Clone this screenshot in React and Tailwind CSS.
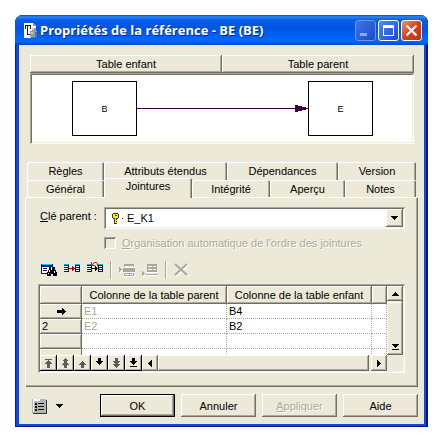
import React from "react";

const raised =
  "bg-[#ece9d8] shadow-[inset_-1px_-1px_#716f64,inset_1px_1px_#fff,inset_-2px_-2px_#aca899]";
const sunken =
  "shadow-[inset_1px_1px_#aca899,inset_-1px_-1px_#fff,inset_2px_2px_#716f64,inset_-2px_-2px_#f1efe2]";
const disabledText = "text-[#aca899] [text-shadow:1px_1px_#fff]";

const AppIcon = () => (
  <svg width="16" height="17" viewBox="0 0 16 17" shapeRendering="crispEdges">
    <path d="M1 1h9l3 3v12H1z" fill="#fff" />
    <path d="M2 3h6v1H2z" fill="#111a4a" />
    <path d="M2 4h1v3H2zM4 4h1v8H4zM7 4h1v3H7zM4 12h4v1H4z" fill="#111a4a" />
    <path d="M10 1l3 3h-3z" fill="#8aa" />
    <path d="M9 6h4v3H9zM7 9h7v6H7z" fill="#9a9a9a" />
    <path d="M9 6h2v2H9zM8 10h2v2H8z" fill="#d0d0d0" />
    <path d="M12 10h2v5h-2zM8 15h5v1H8z" fill="#6d6d6d" />
  </svg>
);

const KeyIcon = () => (
  <svg width="8" height="11" viewBox="0 0 8 11" shapeRendering="crispEdges">
    <path d="M1 0h5v1h1v4H6v1H5v5H2V6H1V5H0V1h1z" fill="#333" />
    <path d="M1 1h5v4H1zM3 5h1v5H3z" fill="#ffee00" />
    <path d="M3 2h2v1H3z" fill="#333" />
    <path d="M4 7h1v1H4zM4 9h1v1H4z" fill="#ffee00" />
  </svg>
);

const FindIcon = () => (
  <svg width="16" height="16" viewBox="0 0 16 16" shapeRendering="crispEdges">
    <path d="M0 2h12v10H0z" fill="#10106b" />
    <path d="M1 2h10v1H1z" fill="#00d8e8" />
    <path d="M1 5h10v6H1z" fill="#fff" />
    <path d="M2 6h4v1H2zM2 8h4v1H2z" fill="#10106b" />
    <path d="M8 5h2v3h2V5h2v3h1v2h1v4h-4v-3h-2v3H6v-4h1V8h1z" fill="#000" />
    <path d="M8 8h1v2H8zM13 9h1v2h-1zM7 11h1v1H7z" fill="#fff" />
  </svg>
);

const MiniTables = () => (
  <>
    <path d="M0 3h5v7H0zM11 3h5v7h-5z" fill="#10106b" />
    <path d="M0 2h5v1H0zM11 2h5v1h-5z" fill="#00b8e0" />
    <path d="M0 4h4v1H0zM0 6h4v1H0zM0 8h4v1H0zM12 4h3v1h-3zM12 6h3v1h-3zM12 8h3v1h-3z" fill="#fff" />
  </>
);

const JoinIcon = () => (
  <svg width="16" height="16" viewBox="0 0 16 16" shapeRendering="crispEdges">
    <MiniTables />
    <path d="M5 6h6v1H5zM8 4h1v5H8zM9 5h1v3H9z" fill="#c00000" />
  </svg>
);

const UnjoinIcon = () => (
  <svg width="16" height="16" viewBox="0 0 16 16" shapeRendering="crispEdges">
    <MiniTables />
    <path d="M5 6h6v1H5zM8 4h1v5H8zM9 5h1v3H9z" fill="#000" />
    <path d="M4 0h1v4H4zM5 3h3v1H5zM5 2h1v1H5zM6 1h1v1H6zM7 0h3v1H7zM10 1h1v3h-1z" fill="#c02020" />
  </svg>
);

const InsertRowIcon = () => (
  <svg width="16" height="16" viewBox="0 0 16 16" shapeRendering="crispEdges">
    <path d="M1 6h1v5H1zM2 7h1v3H2zM3 8h1v1H3zM5 5h11v1H5zM5 10h11v1H5zM5 14h11v1H5z" fill="#fff" />
    <path d="M0 5h1v5H0zM1 6h1v3H1zM2 7h1v1H2zM5 2h10v3H5zM4 6h12v4H4zM5 11h10v3H5z" fill="#aca899" />
    <path d="M6 4h4v1H6zM11 4h3v1h-3zM6 12h4v1H6zM11 12h3v1h-3z" fill="#fff" />
  </svg>
);

const AddRowIcon = () => (
  <svg width="16" height="16" viewBox="0 0 16 16" shapeRendering="crispEdges">
    <path d="M1 10h1v5H1zM2 11h1v3H2zM5 10h11v1H5zM5 13h11v1H5z" fill="#fff" />
    <path d="M0 9h1v5H0zM1 10h1v3H1zM2 11h1v1H2zM5 2h10v8H5zM4 12h12v1H4z" fill="#aca899" />
    <path d="M6 4h4v1H6zM11 4h3v1h-3zM6 7h4v1H6zM11 7h3v1h-3z" fill="#fff" />
  </svg>
);

const DeleteIcon = () => (
  <svg width="15" height="16" viewBox="0 0 15 16" fill="none" strokeWidth="2">
    <path d="M2 3l12 11M14 3L2 14" stroke="#fff" />
    <path d="M1 2l12 11M13 2L1 13" stroke="#aca899" />
  </svg>
);

const MenuIcon = () => (
  <svg width="16" height="16" viewBox="0 0 16 16" shapeRendering="crispEdges">
    <path d="M1 2h14v14H1z" fill="#333" />
    <path d="M0 1h14v14H0z" fill="#b4b4b4" />
    <path d="M1 1h7v2H1zM1 3h1v11H1z" fill="#fff" />
    <path d="M3 5h2v2H3zM3 8h2v2H3zM3 11h2v2H3zM6 5h6v1H6zM6 8h6v1H6zM6 11h6v1H6z" fill="#111" />
  </svg>
);

const DownTriangle = () => (
  <svg width="7" height="4" viewBox="0 0 7 4" shapeRendering="crispEdges">
    <path d="M0 0h7v1H0zM1 1h5v1H1zM2 2h3v1H2zM3 3h1v1H3z" />
  </svg>
);

// first, page up, up, down, page down, last
const navButtons = [
  { label: "Premier", color: "#5c5c5c", d: "M1 1h7v1H1zM4 2h1v1H4zM3 3h3v1H3zM2 4h5v1H2zM1 5h7v1H1zM3 6h3v4H3z" },
  { label: "Page précédente", color: "#5c5c5c", d: "M4 0h1v1H4zM3 1h3v1H3zM2 2h5v1H2zM3 3h3v1H3zM3 4h3v1H3zM2 5h5v1H2zM1 6h7v1H1zM3 7h3v3H3z" },
  { label: "Précédent", color: "#5c5c5c", d: "M4 3h1v1H4zM3 4h3v1H3zM2 5h5v1H2zM1 6h7v1H1zM3 7h3v3H3z" },
  { label: "Suivant", color: "#000", d: "M3 0h3v3H3zM1 3h7v1H1zM2 4h5v1H2zM3 5h3v1H3zM4 6h1v1H4z" },
  { label: "Page suivante", color: "#5c5c5c", d: "M3 0h3v3H3zM1 3h7v1H1zM2 4h5v1H2zM3 5h3v1H3zM1 6h7v1H1zM2 7h5v1H2zM3 8h3v1H3zM4 9h1v1H4z" },
  { label: "Dernier", color: "#000", d: "M3 0h3v3H3zM1 3h7v1H1zM2 4h5v1H2zM3 5h3v1H3zM4 6h1v1H4zM1 8h7v1H1z" },
];

const rows = [
  { num: "", current: true, parent: "E1", child: "B4" },
  { num: "2", parent: "E2", child: "B2" },
  { num: "", parent: "", child: "" },
];

const Tab = ({ children, selected }) => (
  <button
    role="tab"
    aria-selected={!!selected}
    className={
      selected
        ? "relative z-10 -mt-0.5 -mb-px rounded-t-xs bg-[#ece9d8] pb-1 shadow-[inset_1px_1px_#fff,inset_-1px_0_#716f64,inset_-2px_0_#aca899]"
        : "rounded-t-xs shadow-[inset_1px_1px_#fff,inset_-1px_0_#716f64,inset_-2px_0_#aca899]"
    }
  >
    {children}
  </button>
);

const TitleButton = ({ label, className, children }) => (
  <button
    aria-label={label}
    className={`flex h-[21px] w-[21px] items-center justify-center rounded-[3px] border ${className}`}
  >
    {children}
  </button>
);

const headCell =
  "h-[18px] border-r border-b border-[#716f64] bg-[#ece9d8] p-0 text-center font-normal shadow-[inset_1px_1px_#fff,inset_-1px_-1px_#aca899]";
const bodyCell =
  "border-r border-b border-dotted border-[#aca899] p-0 pl-0.5 text-left";

const App = () => {
  return (
    <div className="bg-white pt-[15px] pr-3 pb-2 pl-[15px] font-['Liberation_Sans',Arial,sans-serif] text-[11px] leading-[14px] text-black">
      <div className="overflow-hidden rounded-t-lg bg-[#0a48e0] shadow-[inset_1px_0_#0019cf,inset_-2px_-1px_#00138c]">
        <header className="flex h-[30px] items-center gap-px bg-[linear-gradient(#0a45b8_0%,#2b86f8_6%,#0a5ee8_16%,#0054e3_45%,#0064fc_75%,#0066ff_88%,#0048c8_100%)] pr-1.5 pl-2">
          <AppIcon />
          <h1 className="flex-1 text-[13px] font-bold whitespace-nowrap text-white [font-family:'Open_Sans',sans-serif] [text-shadow:1px_1px_#0a2a80]">
            Propriétés de la référence - BE (BE)
          </h1>
          <div className="flex gap-0.5">
            <TitleButton
              label="Réduire"
              className="border-[#6a94e8] bg-[linear-gradient(135deg,#3f74e4,#1c4cc8)]"
            >
              <span className="mt-2 mr-1 h-[3px] w-[7px] bg-[#8cabee]" />
            </TitleButton>
            <TitleButton
              label="Agrandir"
              className="border-white bg-[linear-gradient(135deg,#4f8cf6,#1648d8)]"
            >
              <span className="h-[11px] w-[11px] border border-t-[3px] border-white" />
            </TitleButton>
            <TitleButton
              label="Fermer"
              className="border-white bg-[linear-gradient(135deg,#f09070,#d8401c_50%,#c03010)]"
            >
              <svg width="13" height="13" viewBox="0 0 13 13">
                <path d="M1.5 1.5l10 10M11.5 1.5l-10 10" stroke="#fff" strokeWidth="2.2" />
              </svg>
            </TitleButton>
          </div>
        </header>

        <main className="mx-1 mb-[3px] bg-[#ece9d8] px-1.5 pt-2.5 pb-[7px]">
          <section className="mr-1 ml-[5px]">
            <div className="grid h-[18px] grid-cols-2 text-center">
              <div className={`pt-0.5 ${raised}`}>Table enfant</div>
              <div className={`pt-0.5 ${raised}`}>Table parent</div>
            </div>
            <div className={`flex h-[71px] items-center bg-white pr-[41px] pl-[42px] ${sunken}`}>
              <div className="flex h-[55px] w-[65px] items-center justify-center border border-black text-[9px]">
                B
              </div>
              <div className="h-px flex-1 bg-[#400040]" />
              <svg width="13" height="7" viewBox="0 0 13 7" shapeRendering="crispEdges">
                <path d="M0 0h3v1h4v1h4v1h2v1h-2v1H7v1H3v1H0z" fill="#400040" />
              </svg>
              <div className="flex h-[55px] w-[65px] items-center justify-center border border-black text-[9px]">
                E
              </div>
            </div>
          </section>

          <div role="tablist" className="mx-0.5 mt-[18px]">
            <div className="grid h-[18px] grid-cols-[77fr_123fr_111fr_78fr]">
              <Tab>Règles</Tab>
              <Tab>Attributs étendus</Tab>
              <Tab>Dépendances</Tab>
              <Tab>Version</Tab>
            </div>
            <div className="grid h-[17px] grid-cols-[77fr_88fr_78fr_75fr_71fr]">
              <Tab>Général</Tab>
              <Tab selected>Jointures</Tab>
              <Tab>Intégrité</Tab>
              <Tab>Aperçu</Tab>
              <Tab>Notes</Tab>
            </div>
          </div>

          <section
            role="tabpanel"
            className="px-[13px] pt-2.5 pb-3.5 shadow-[inset_1px_1px_#fff,inset_-1px_-1px_#716f64,inset_-2px_-2px_#aca899]"
          >
            <div className="flex items-center">
              <label htmlFor="parent-key" className="w-[66px] pb-1 pl-0.5">
                <u>C</u>lé parent :
              </label>
              <div className={`relative h-[22px] flex-1 bg-white p-0.5 ${sunken}`}>
                <select
                  id="parent-key"
                  className="h-full w-full appearance-none pl-[21px] text-[11px] outline-none"
                >
                  <option>E_K1</option>
                </select>
                <span className="pointer-events-none absolute top-[6px] left-2 flex items-center gap-0.5">
                  <KeyIcon />
                  <span className="h-px w-px bg-black" />
                </span>
                <span
                  className={`pointer-events-none absolute top-0.5 right-0.5 bottom-0.5 flex w-[17px] items-center justify-center ${raised}`}
                >
                  <DownTriangle />
                </span>
              </div>
            </div>

            <div className="mt-[7px] ml-[66px] flex items-center gap-1.5">
              <input
                id="auto-order"
                type="checkbox"
                disabled
                className={`h-3 w-3 appearance-none bg-[#ece9d8] ${sunken}`}
              />
              <label htmlFor="auto-order" className={disabledText}>
                <u>O</u>rganisation automatique de l'ordre des jointures
              </label>
            </div>

            <div className="mt-[11px] flex h-[18px] items-center gap-[7px] pl-[3px]">
              <button aria-label="Rechercher"><FindIcon /></button>
              <button aria-label="Joindre"><JoinIcon /></button>
              <button aria-label="Supprimer les jointures"><UnjoinIcon /></button>
              <span className="h-full w-0.5 border-r border-l border-r-white border-l-[#aca899]" />
              <button aria-label="Insérer une ligne" disabled><InsertRowIcon /></button>
              <button aria-label="Ajouter une ligne" disabled><AddRowIcon /></button>
              <span className="h-full w-0.5 border-r border-l border-r-white border-l-[#aca899]" />
              <button aria-label="Supprimer" disabled><DeleteIcon /></button>
            </div>

            <div className={`mt-[5px] bg-[#ece9d8] p-0.5 ${sunken}`}>
              <div className="flex h-[69px]">
                <div className="min-w-0 flex-1 overflow-hidden bg-white">
                  <table className="w-full table-fixed border-separate border-spacing-0">
                    <colgroup>
                      <col className="w-[42px]" />
                      <col className="w-[145px]" />
                      <col className="w-[145px]" />
                      <col />
                    </colgroup>
                    <thead>
                      <tr>
                        <th className={headCell} />
                        <th className={headCell}>Colonne de la table parent</th>
                        <th className={headCell}>Colonne de la table enfant</th>
                        <th className={headCell} />
                      </tr>
                    </thead>
                    <tbody>
                      {rows.map((row, i) => (
                        <tr key={i} className="h-[15px]">
                          <th className="border-r border-b border-[#716f64] bg-[#ece9d8] p-0 pl-0.5 text-left font-normal shadow-[inset_1px_1px_#fff,inset_-1px_-1px_#aca899]">
                            {row.current ? (
                              <svg className="mx-auto" width="9" height="7" viewBox="0 0 9 7" shapeRendering="crispEdges">
                                <path d="M0 2h5V0h1v1h1v1h1v1h1v1H8v1H7v1H6v1H5V5H0z" />
                              </svg>
                            ) : (
                              row.num
                            )}
                          </th>
                          <td className={`${bodyCell} text-[#aca899]`}>{row.parent}</td>
                          <td className={bodyCell}>{row.child}</td>
                          <td className={bodyCell} />
                        </tr>
                      ))}
                      <tr className="h-[15px]">
                        <th className="border-r border-[#716f64] bg-[#ece9d8] shadow-[inset_1px_1px_#fff]" />
                        <td className={bodyCell} />
                        <td className={bodyCell} />
                        <td className={bodyCell} />
                      </tr>
                    </tbody>
                  </table>
                </div>
                <div className={`flex w-4 flex-col ${raised}`}>
                  <button
                    aria-label="Défiler vers le haut"
                    className={`flex h-[15px] items-center justify-center ${raised}`}
                  >
                    <svg width="7" height="4" viewBox="0 0 7 4" shapeRendering="crispEdges">
                      <path d="M3 0h1v1H3zM2 1h3v1H2zM1 2h5v1H1zM0 3h7v1H0z" />
                    </svg>
                  </button>
                  <button
                    aria-label="Défiler vers le bas"
                    className={`mt-px flex flex-1 items-end justify-center pb-[5px] ${raised}`}
                  >
                    <svg width="7" height="6" viewBox="0 0 7 6" shapeRendering="crispEdges">
                      <path d="M0 0h7v1H0zM1 1h5v1H1zM2 2h3v1H2zM3 3h1v1H3zM0 5h7v1H0z" />
                    </svg>
                  </button>
                </div>
              </div>

              <div className="flex h-4 pr-4">
                {navButtons.map((button) => (
                  <button
                    key={button.label}
                    aria-label={button.label}
                    className="flex w-[17px] items-center justify-center bg-[#ece9d8] shadow-[inset_-1px_-1px_#000,inset_1px_1px_#fff,inset_-2px_-2px_#aca899]"
                  >
                    <svg width="9" height="10" viewBox="0 0 9 10" shapeRendering="crispEdges">
                      <path d={button.d} fill={button.color} />
                    </svg>
                  </button>
                ))}
                <button
                  aria-label="Défiler vers la gauche"
                  className={`flex w-4 items-center justify-center ${raised}`}
                >
                  <svg width="4" height="7" viewBox="0 0 4 7" shapeRendering="crispEdges">
                    <path d="M3 0h1v7H3zM2 1h1v5H2zM1 2h1v3H1zM0 3h1v1H0z" />
                  </svg>
                </button>
                <div className={`flex-1 ${raised}`} />
                <button
                  aria-label="Défiler vers la droite"
                  className={`ml-0.5 flex w-4 items-center justify-center ${raised}`}
                >
                  <svg width="4" height="7" viewBox="0 0 4 7" shapeRendering="crispEdges">
                    <path d="M0 0h1v7H0zM1 1h1v5H1zM2 2h1v3H2zM3 3h1v1H3z" />
                  </svg>
                </button>
              </div>
            </div>
          </section>

          <footer className="mt-[7px] flex items-center gap-1.5">
            <button aria-label="Menu" className="mr-auto flex items-center gap-2 pl-[7px]">
              <MenuIcon />
              <DownTriangle />
            </button>
            <button className="h-[23px] w-[75px] border border-black bg-[#ece9d8] shadow-[inset_-1px_-1px_#716f64,inset_1px_1px_#fff,inset_-2px_-2px_#aca899]">
              OK
            </button>
            <button className={`h-[23px] w-[75px] ${raised}`}>Annuler</button>
            <button disabled className={`h-[23px] w-[75px] ${raised} ${disabledText}`}>
              <u>A</u>ppliquer
            </button>
            <button className={`h-[23px] w-[75px] ${raised}`}>Aide</button>
          </footer>
        </main>
      </div>
    </div>
  );
};

export default App;
